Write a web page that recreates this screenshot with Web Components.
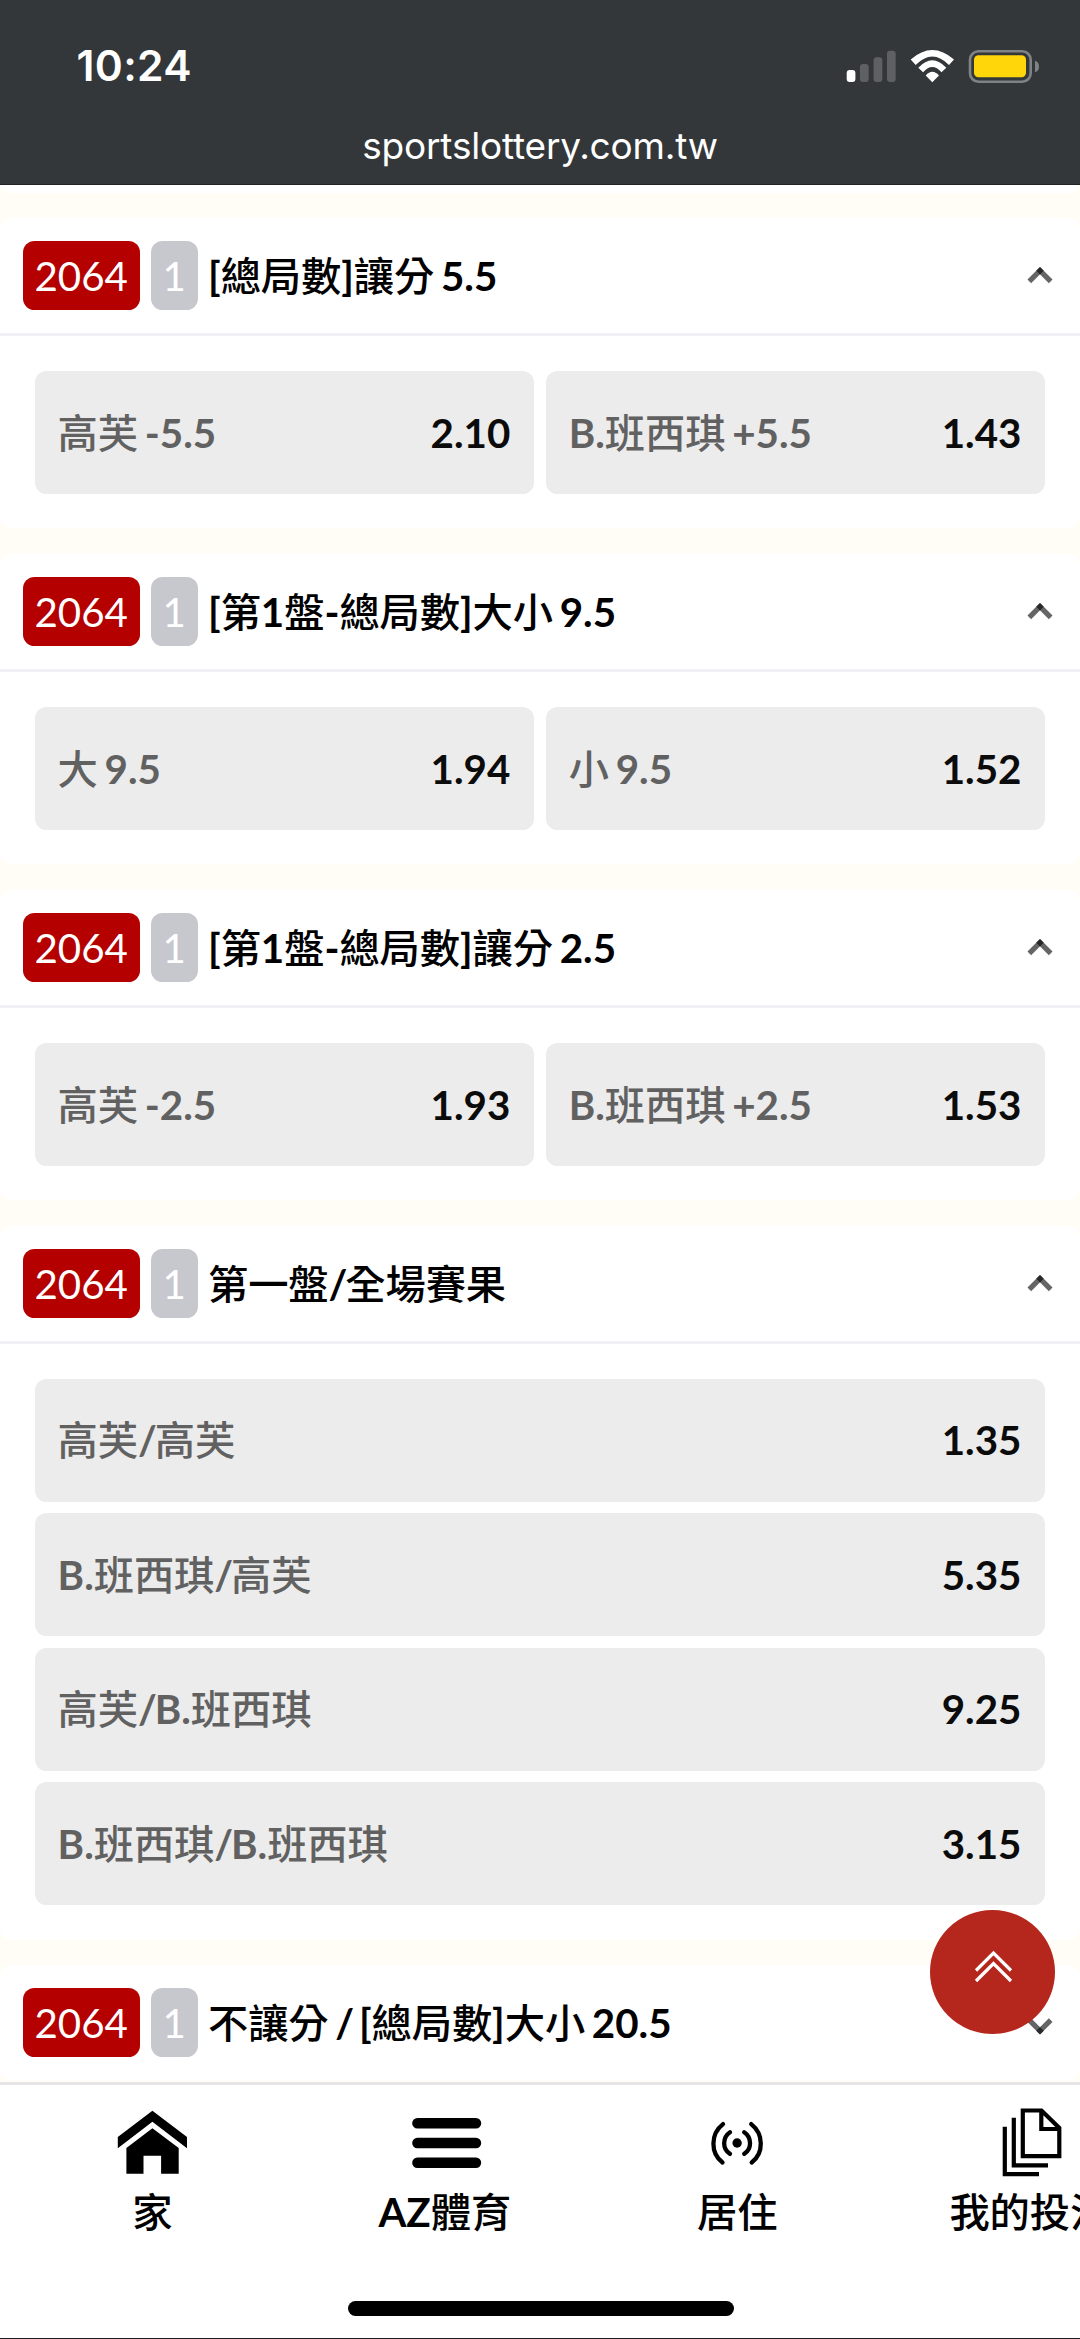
<!DOCTYPE html>
<html lang="zh-Hant">
<head>
<meta charset="utf-8">
<title>sportslottery.com.tw</title>
<style>
html,body{margin:0;padding:0}
body{width:1080px;height:2339px;overflow:hidden;background:#fffdf5;font-family:Lato,"Noto Sans CJK TC",sans-serif;font-size:40.3px;color:#000}
</style>
</head>
<body>
<lottery-app></lottery-app>
<script>
const define=(name,html,setup)=>customElements.define(name,class extends HTMLElement{
  constructor(){super();this.attachShadow({mode:'open'}).innerHTML=html;}
  connectedCallback(){if(setup)setup(this,this.shadowRoot);}
});

// Latin runs are set bold, Chinese runs medium; slashes sit tighter
const fillMixed=(node,text)=>{
  for(const run of text.match(/\/|[\x00-\x2e\x30-\x7f]+|[^\x00-\x7f]+/g)){
    const s=document.createElement('span');
    const latin=run.charCodeAt(0)<128;
    s.textContent=run;
    s.style.fontWeight=latin?700:500;
    s.style.letterSpacing=run==='/'?'-2px':latin?'0':'-.12px';
    s.style.wordSpacing='-3px';
    node.append(s);
  }
};

define('phone-header',`
<style>
:host{display:flex;flex-direction:column;height:185px;background:#343739;color:#fff;flex:none;box-sizing:border-box;border-bottom:1px solid #202224}
.status{display:flex;justify-content:space-between;height:123.500px;box-sizing:border-box;padding:41px 41px 0 76.500px}
.time{font:600 42.5px/50px Inter,sans-serif;letter-spacing:.35px}
.url{font:400 37px/44px Inter,sans-serif;text-align:center;letter-spacing:-.2px}
svg{display:block;width:193px;height:34px;margin-top:10px;overflow:visible}
</style>
<div class="status"><span class="time">10:24</span>
<svg viewBox="0 0 193 34">
<rect x="0.700" y="19" width="8.700" height="12" rx="3" fill="#fff"/>
<rect x="14" y="13" width="8.700" height="18" rx="3" fill="#5e6061"/>
<rect x="27.600" y="6.300" width="8.700" height="24.700" rx="3" fill="#5e6061"/>
<rect x="41" y="-.300" width="8.700" height="31.300" rx="3" fill="#5e6061"/>
<g fill="#fff"><path d="M64.700 8.500Q86.300 -10.500 108 8.500L103 14Q86.300 -3 69.700 14Z"/>
<path d="M72.300 16.700Q86.300 1.700 100.300 16.700L95.500 21.300Q86.300 10.600 77.100 21.300Z"/>
<path d="M86.300 31.200L79.700 24.500Q86.300 17 93 24.500Z"/></g>
<rect x="124" y="0.300" width="60.700" height="30.400" rx="8.500" fill="none" stroke="#808384" stroke-width="2.600"/>
<rect x="128" y="4.300" width="52" height="22" rx="4.500" fill="#ffd60a"/>
<path d="M189 9.700Q193 11 193 15.500T189 21.300Z" fill="#808384"/>
</svg></div>
<div class="url">sportslottery.com.tw</div>`);

define('odds-button',`
<style>
:host{display:flex;justify-content:space-between;align-items:center;box-sizing:border-box;height:122.900px;flex:1;padding:0 24px 0 23px;border-radius:11.500px;background:#ececec;line-height:60px}
.name{color:#616161;white-space:pre}
.odd{font-weight:700;color:#0b0b0b}
</style>
<span class="name"></span><span class="odd"></span>`,
(el,r)=>{
  fillMixed(r.querySelector('.name'),el.getAttribute('name'));
  r.querySelector('.odd').textContent=el.getAttribute('odd');
});

define('chevron-icon',`
<style>
:host{display:block;width:26px;height:18px;flex:none}
:host([down]){transform:translateY(2.500px) rotate(180deg)}
svg{display:block}
</style>
<svg width="26" height="18" viewBox="0 0 26 18"><path d="M2.300 14.300L13 3.700L23.700 14.300" fill="none" stroke="#656565" stroke-width="5.200"/><path d="M13 0L16.700 3.700L13 7.400L9.300 3.700Z" fill="#262829"/></svg>`);

define('bet-card',`
<style>
:host{display:block;background:#fff;border-radius:12px}
header{display:flex;align-items:center;height:115px;padding:0 27px 0 23px}
:host(:not([closed])) header{border-bottom:3px solid #f0f0f6}
b{display:flex;align-items:center;justify-content:center;height:69px;box-sizing:border-box;border-radius:11.500px;color:#fff;font-weight:400;line-height:60px}
.no{width:116.500px;background:#b50000;margin-right:11px}
.one{width:47.500px;background:#c7c7ce;margin-right:10px}
.title{flex:1;white-space:pre;line-height:60px}
.body{display:flex;gap:11.500px;padding:35px 34.600px 34.500px}
:host([rows]) .body{flex-direction:column}
:host([rows]) ::slotted(*){flex:none}
:host([closed]) .body{display:none}
</style>
<header><b class="no">2064</b><b class="one">1</b><span class="title"></span><chevron-icon></chevron-icon></header>
<div class="body"><slot></slot></div>`,
(el,r)=>{
  fillMixed(r.querySelector('.title'),el.getAttribute('label'));
  if(el.hasAttribute('closed'))r.querySelector('chevron-icon').setAttribute('down','');
});

define('nav-item',`
<style>
:host{display:flex;flex-direction:column;align-items:center;width:292.500px;flex:none}
.ic{height:70px;display:flex;align-items:center;justify-content:center}
.label{line-height:60px;margin-top:6px;white-space:nowrap}
</style>
<div class="ic"><slot></slot></div><span class="label"></span>`,
(el,r)=>fillMixed(r.querySelector('.label'),el.getAttribute('label')));

define('tab-bar',`
<style>
:host{display:block;position:absolute;left:0;top:2082px;width:1080px;height:257px;box-sizing:border-box;border-top:3px solid #e6e6e9;border-bottom:1px solid #1c1c1e;background:#fff;overflow:hidden}
.items{display:flex;padding:21px 0 0 6px;height:195px;box-sizing:border-box}
.home{width:386px;height:14.500px;border-radius:8px;background:#000;margin:21.300px 0 0 347.500px}
svg{display:block;width:70px;height:70px;overflow:visible}
</style>
<div class="items">
<nav-item label="家"><svg viewBox="0 0 70 70"><path d="M35.400 4.700L70 31V42.300L35.400 15.700L.800 42.300V31Z"/><path d="M35.400 22.300L61.700 41.900V67.700H44.100V49.700H26.500V67.700H9.400V41.900Z"/></svg></nav-item>
<nav-item label="AZ體育"><svg viewBox="0 0 70 70"><rect x="2.200" y="12" width="69" height="10.500" rx="5.200"/><rect x="2.200" y="31.700" width="69" height="10.500" rx="5.200"/><rect x="2.200" y="51.400" width="69" height="10.500" rx="5.200"/></svg></nav-item>
<nav-item label="居住"><svg viewBox="0 0 70 70"><g fill="none" stroke="#000" stroke-width="4.300" stroke-linecap="round"><path d="M21 18.100C8.300 28 8.300 47 20.500 56.500M49.200 18.100C61.900 28 61.900 47 49.700 56.500M28 26.200C20.200 31.500 20.200 43 28 47.900M42.200 26.200C50 31.500 50 43 42.200 47.900"/></g><circle cx="35.100" cy="37" r="4.700"/></svg></nav-item>
<nav-item label="我的投注"><svg viewBox="0 0 70 70"><g fill="none" stroke="#000" stroke-width="4.200"><path d="M27.800 4.500H46.500L64.300 22V50.200H27.800ZM46.300 4.500V23H64.300M18.800 11.700V59.300H53M9.800 20.700V68.200H44"/></g></svg></nav-item>
</div><div class="home"></div>`);

define('top-button',`
<style>
:host{position:absolute;left:930px;top:1910px;width:124.500px;height:124px;border-radius:50%;background:#b5271c}
svg{display:block}
</style>
<svg width="125" height="124" viewBox="0 0 125 124"><path d="M46 60.500L63.500 43L81 60.500M46 71L63.500 53.500L81 71" fill="none" stroke="#fff" stroke-width="3.200"/></svg>`);

define('lottery-app',`
<style>
:host{display:flex;flex-direction:column;width:1080px;height:2339px;overflow:hidden;position:relative}
main{display:flex;flex-direction:column;gap:25.600px}
.prev{height:21.500px;margin-top:-14px;background:#fff;border-radius:0 0 12px 12px}
phone-header{z-index:1}
</style>
<phone-header></phone-header>
<main>
<div class="prev"></div>
<bet-card label="[總局數]讓分 5.5"><odds-button odd="2.10" name="高芙 -5.5"></odds-button><odds-button odd="1.43" name="B.班西琪 +5.5"></odds-button></bet-card>
<bet-card label="[第1盤-總局數]大小 9.5"><odds-button odd="1.94" name="大 9.5"></odds-button><odds-button odd="1.52" name="小 9.5"></odds-button></bet-card>
<bet-card label="[第1盤-總局數]讓分 2.5"><odds-button odd="1.93" name="高芙 -2.5"></odds-button><odds-button odd="1.53" name="B.班西琪 +2.5"></odds-button></bet-card>
<bet-card rows label="第一盤/全場賽果"><odds-button odd="1.35" name="高芙/高芙"></odds-button><odds-button odd="5.35" name="B.班西琪/高芙"></odds-button><odds-button odd="9.25" name="高芙/B.班西琪"></odds-button><odds-button odd="3.15" name="B.班西琪/B.班西琪"></odds-button></bet-card>
<bet-card closed label="不讓分 / [總局數]大小 20.5"></bet-card>
</main>
<tab-bar></tab-bar><top-button></top-button>`);
</script>
</body>
</html>
